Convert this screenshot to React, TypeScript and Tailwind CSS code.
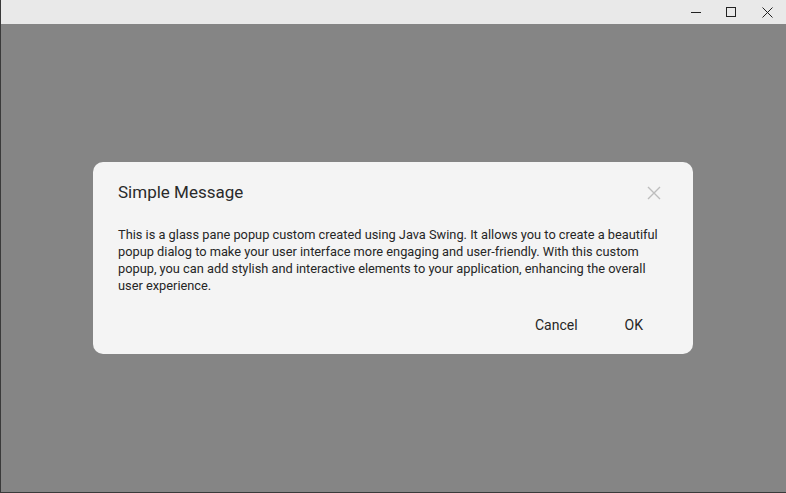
import React from "react";

export default function App() {
  return (
    <div className="w-[786px] h-[493px] flex flex-col bg-[#858585] border-l border-b border-[#3a3a3a] overflow-hidden" style={{ fontFamily: "Roboto, 'Liberation Sans', sans-serif" }}>
      <div className="h-[24px] bg-[#e9e9e9] flex justify-end items-center shrink-0">
        <div className="w-[35px] h-full flex items-center justify-center">
          <svg width="10" height="10" viewBox="0 0 10 10"><path d="M0 5.5h10" stroke="#222" strokeWidth="1" /></svg>
        </div>
        <div className="w-[35px] h-full flex items-center justify-center">
          <svg width="10" height="10" viewBox="0 0 10 10"><rect x="0.5" y="0.5" width="9" height="9" fill="none" stroke="#222" strokeWidth="1" /></svg>
        </div>
        <div className="w-[38px] h-full flex items-center justify-center">
          <svg width="11" height="11" viewBox="0 0 11 11"><path d="M0.5 0.5l10 10M10.5 0.5l-10 10" stroke="#222" strokeWidth="1" /></svg>
        </div>
      </div>
      <div className="flex-1 flex justify-start pt-[138px] pl-[92px]">
        <div className="w-[600px] h-[192px] bg-[#f4f4f4] rounded-[10px] flex flex-col px-[25px]">
          <div className="flex items-center justify-between pt-[16px] h-[45px]">
            <span className="text-[17px] text-[#2a2a2a]">Simple Message</span>
            <svg width="14" height="14" viewBox="0 0 14 14" className="mr-[7px]"><path d="M1 1l12 12M13 1L1 13" stroke="#bdbdbd" strokeWidth="1.4" /></svg>
          </div>
          <p className="mt-[19px] text-[12.8px] leading-[17px] text-[#262626]">
            This is a glass pane popup custom created using Java Swing. It allows you to create a beautiful popup dialog to make your user interface more engaging and user-friendly. With this custom popup, you can add stylish and interactive elements to your application, enhancing the overall user experience.
          </p>
          <div className="flex justify-end items-center mt-[21px] text-[14px] text-[#262626]">
            <span className="mr-[47px]">Cancel</span>
            <span className="mr-[25px]">OK</span>
          </div>
        </div>
      </div>
    </div>
  );
}
